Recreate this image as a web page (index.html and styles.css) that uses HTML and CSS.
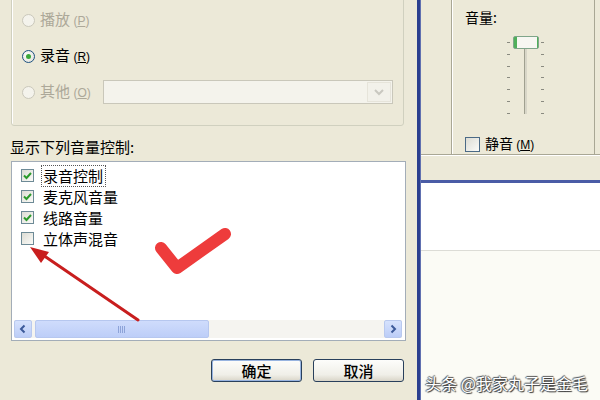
FILE: index.html
```html
<!DOCTYPE html>
<html>
<head>
<meta charset="utf-8">
<link rel="stylesheet" href="styles.css">
</head>
<body>
<div class="screen">
  <div class="dlg">
    <div class="group">
      <div class="row disabled"><span class="radio"></span><span class="lbl">播放 <span class="acc">(<u>P</u>)</span></span></div>
      <div class="row"><span class="radio on"><span class="dot"></span></span><span class="lbl">录音 <span class="acc">(<u>R</u>)</span></span></div>
      <div class="row disabled"><span class="radio"></span><span class="lbl">其他 <span class="acc">(<u>O</u>)</span></span>
        <div class="combo"><span class="cbtn"><svg width="12" height="8" viewBox="0 0 12 8"><path d="M2 2 L6 6 L10 2" fill="none" stroke="#c9c8c0" stroke-width="2"/></svg></span></div>
      </div>
    </div>
    <div class="caption">显示下列音量控制:</div>
    <div class="list">
      <div class="items">
        <div class="item"><span class="chk on"><svg width="11" height="11" viewBox="0 0 11 11"><path d="M2 5.5 L4.5 8 L9 3" fill="none" stroke="#2b9a2b" stroke-width="2"/></svg></span><span class="txt focus">录音控制</span></div>
        <div class="item"><span class="chk on"><svg width="11" height="11" viewBox="0 0 11 11"><path d="M2 5.5 L4.5 8 L9 3" fill="none" stroke="#2b9a2b" stroke-width="2"/></svg></span><span class="txt">麦克风音量</span></div>
        <div class="item"><span class="chk on"><svg width="11" height="11" viewBox="0 0 11 11"><path d="M2 5.5 L4.5 8 L9 3" fill="none" stroke="#2b9a2b" stroke-width="2"/></svg></span><span class="txt">线路音量</span></div>
        <div class="item"><span class="chk"></span><span class="txt">立体声混音</span></div>
      </div>
      <div class="hscroll">
        <span class="sbtn"><svg width="10" height="10" viewBox="0 0 10 10"><path d="M6.5 1.5 L3 5 L6.5 8.5" fill="none" stroke="#3c5a9a" stroke-width="2"/></svg></span>
        <span class="thumb"><span class="grip"></span></span>
        <span class="track"></span>
        <span class="sbtn"><svg width="10" height="10" viewBox="0 0 10 10"><path d="M3.5 1.5 L7 5 L3.5 8.5" fill="none" stroke="#3c5a9a" stroke-width="2"/></svg></span>
      </div>
    </div>
    <div class="buttons">
      <button class="btn def">确定</button>
      <button class="btn">取消</button>
    </div>
  </div>
  <div class="sep"></div>
  <div class="right">
    <div class="rdlg">
      <div class="rtop">
        <div class="rleft"></div>
        <div class="rpanel">
          <div class="vol">音量:</div>
          <div class="slider">
            <div class="ticks">
              <i></i><i></i><i></i><i></i><i></i><i></i><i></i>
            </div>
            <div class="trackv"><span class="vthumb"></span></div>
            <div class="ticks">
              <i></i><i></i><i></i><i></i><i></i><i></i><i></i>
            </div>
          </div>
          <div class="mute"><span class="chk big"></span><span>静音 <span class="acc">(<u>M</u>)</span></span></div>
        </div>
        <div class="redge"></div>
      </div>
      <div class="rstrip"></div>
    </div>
    <div class="white"></div>
    <div class="offwhite"><span class="wm">头条 @我家丸子是金毛</span></div>
  </div>
  <svg class="marks" width="600" height="400" viewBox="0 0 600 400">
    <path d="M161 248 L177 268 L225 234" fill="none" stroke="#ee3c3c" stroke-width="12" stroke-linecap="round" stroke-linejoin="round"/>
    <path d="M157 244 L166 246 L176 262 Z" fill="#ee3c3c"/>
    <line x1="138" y1="320" x2="40" y2="253" stroke="#c81e1e" stroke-width="3" stroke-linecap="round"/>
    <polygon points="30,247 49,252 41,263" fill="#c81e1e"/>
  </svg>
</div>
</body>
</html>
```
FILE: styles.css
```css
html, body { margin: 0; padding: 0; }
body { background: #ece9d8; }
.screen {
  position: relative;
  width: 600px;
  height: 400px;
  overflow: hidden;
  display: flex;
  font-family: "Noto Sans CJK SC", "Liberation Sans", sans-serif;
  font-size: 15px;
  color: #000;
}
.dlg {
  width: 417px;
  flex: none;
  background: #ece9d8;
  display: flex;
  flex-direction: column;
}
.group {
  margin: -20px 0 0 11px;
  width: 371px;
  border: 1px solid #d0d0bf;
  border-radius: 3px;
  padding: 27px 10px 21px 10px;
  box-sizing: content-box;
  display: flex;
  flex-direction: column;
  gap: 12px;
  box-shadow: inset 1px 1px 0 #fff;
}
.row {
  height: 24px;
  display: flex;
  align-items: center;
  gap: 5px;
}
.radio {
  width: 13px;
  height: 13px;
  border-radius: 50%;
  border: 1px solid #1c5180;
  background: radial-gradient(circle at 40% 40%, #fff, #dcdcd4);
  box-sizing: border-box;
  display: flex;
  align-items: center;
  justify-content: center;
  flex: none;
}
.row.disabled .radio { border-color: #cac8bb; background: #f4f3ec; }
.dot {
  width: 5px;
  height: 5px;
  border-radius: 50%;
  background: #3aa83a;
}
.lbl { line-height: 20px; white-space: nowrap; }
.row.disabled .lbl { color: #aca899; }
.acc { font-family: "Liberation Sans", sans-serif; font-size: 12px; }
.combo {
  margin-left: auto;
  width: 290px;
  height: 24px;
  box-sizing: border-box;
  border: 1px solid #c9c7ba;
  background: #f4f3ec;
  display: flex;
  justify-content: flex-end;
  padding: 1px;
}
.cbtn {
  width: 22px;
  background: #f2f1ea;
  border: 1px solid #e6e4da;
  display: flex;
  align-items: center;
  justify-content: center;
}
.caption {
  margin: 12px 0 0 10px;
  line-height: 18px;
}
.list {
  margin: 5px 0 0 11px;
  width: 395px;
  height: 180px;
  box-sizing: border-box;
  border: 1px solid #a3adb8;
  background: #fff;
  display: flex;
  flex-direction: column;
}
.items {
  flex: 1;
  padding-top: 3px;
}
.item {
  height: 21px;
  display: flex;
  align-items: center;
  padding-left: 9px;
}
.chk {
  width: 13px;
  height: 13px;
  box-sizing: border-box;
  border: 1px solid #6d8a96;
  background: linear-gradient(135deg, #dcdcd4, #fbfbf8);
  display: flex;
  align-items: center;
  justify-content: center;
  flex: none;
}
.chk svg { display: block; }
.txt {
  margin-left: 7px;
  padding: 0 2px 0 1px;
  line-height: 20px;
  border: 1px dotted transparent;
}
.txt.focus { border-color: #555; }
.hscroll {
  height: 18px;
  margin: 0 3px 2px 2px;
  display: flex;
  background: #f5f4f0;
}
.sbtn {
  width: 18px;
  box-sizing: border-box;
  border: 1px solid #b9c9ee;
  border-radius: 2px;
  background: linear-gradient(#d6e2fd, #bccdf7);
  display: flex;
  align-items: center;
  justify-content: center;
  flex: none;
}
.thumb {
  margin-left: 3px;
  width: 174px;
  box-sizing: border-box;
  border: 1px solid #b6c7ef;
  border-radius: 2px;
  background: linear-gradient(#cfdcfc, #bdcef8);
  display: flex;
  align-items: center;
  justify-content: center;
}
.grip {
  width: 8px;
  height: 7px;
  background: repeating-linear-gradient(to right, #8da3d8 0 1px, transparent 1px 2px);
}
.track { flex: 1; }
.buttons {
  margin: 18px 13px 0 0;
  display: flex;
  justify-content: flex-end;
  gap: 11px;
}
.btn {
  width: 91px;
  height: 23px;
  border: 1px solid #29405c;
  border-radius: 3px;
  background: linear-gradient(#fdfdfb, #f0efe8 70%, #d9d5c8);
  font-family: "Noto Sans CJK SC", sans-serif;
  font-size: 15px;
  font-weight: 500;
  color: #000;
  padding: 0;
  line-height: 20px;
}
.btn.def { box-shadow: inset 0 0 0 1px #98b4e0; }
.sep {
  width: 4px;
  flex: none;
  background: linear-gradient(to right, #2b3f8f 0 3px, #6070b0 3px);
}
.right {
  flex: 1;
  display: flex;
  flex-direction: column;
}
.rdlg {
  height: 180px;
  flex: none;
  background: #ece9d8;
  display: flex;
  flex-direction: column;
  border-bottom: 3px solid #4a5ca6;
}
.rtop {
  height: 154px;
  display: flex;
  border-bottom: 1px solid #a9a795;
  box-shadow: 0 1px 0 #fff;
}
.rleft {
  width: 30px;
  border-right: 1px solid #a9a795;
}
.rpanel {
  flex: 1;
  padding: 8px 0 0 13px;
  display: flex;
  flex-direction: column;
  box-shadow: inset 1px 0 0 #fff;
}
.vol { font-size: 14px; line-height: 18px; }
.slider {
  margin: 10px 0 0 42px;
  width: 37px;
  height: 84px;
  display: flex;
  justify-content: space-between;
}
.ticks {
  width: 3px;
  padding-top: 6px;
  display: flex;
  flex-direction: column;
  gap: 10.8px;
}
.ticks i {
  display: block;
  width: 3px;
  height: 1px;
  background: #8a8a80;
}
.trackv {
  position: relative;
  width: 3px;
  margin-top: 6px;
  height: 72px;
  background: #d8d6c8;
  border-left: 1px solid #a0a090;
  box-sizing: border-box;
}
.vthumb {
  position: absolute;
  left: -12px;
  top: -6px;
  width: 26px;
  height: 13px;
  box-sizing: border-box;
  border: 1px solid #7fa58a;
  border-radius: 2px;
  background: linear-gradient(to right, #4fb05a 0 3px, #f7f7f2 3px 23px, #4fb05a 23px);
}
.mute {
  margin-top: 14px;
  display: flex;
  align-items: center;
  gap: 5px;
  font-size: 14px;
  line-height: 18px;
}
.chk.big { width: 15px; height: 15px; border-color: #4b6a86; }
.redge {
  width: 5px;
  border-left: 1px solid #a9a795;
}
.rstrip { flex: 1; }
.white {
  height: 67px;
  flex: none;
  background: #fff;
  border-bottom: 1px solid #dcdcd6;
}
.offwhite {
  flex: 1;
  background: #fbfbf5;
  display: flex;
  align-items: flex-end;
  justify-content: flex-end;
  padding: 0 12px 8px 0;
}
.wm {
  font-size: 16px;
  line-height: 18px;
  color: #fff;
  text-shadow: 1px 1px 1px #333, -1px 0 1px #555, 0 -1px 1px #555;
  white-space: nowrap;
}
.marks {
  position: absolute;
  left: 0;
  top: 0;
  pointer-events: none;
}
```
